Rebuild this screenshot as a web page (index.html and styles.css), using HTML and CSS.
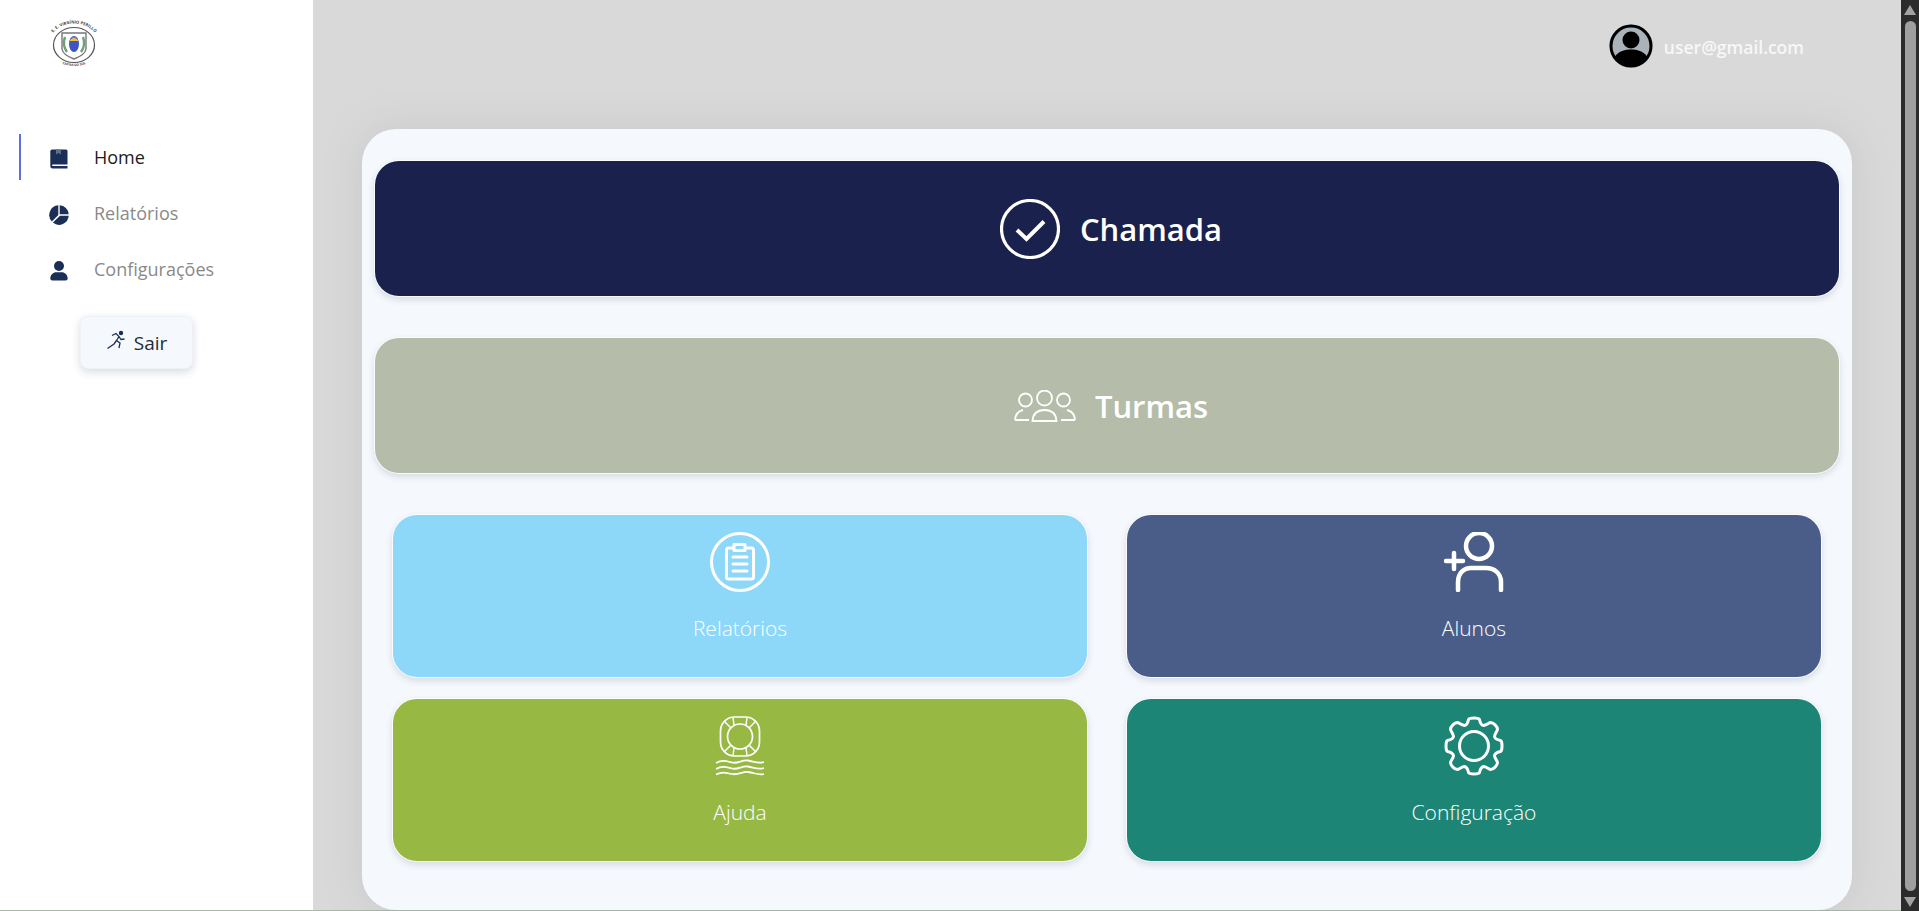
FILE: index.html
```html
<!DOCTYPE html>
<html lang="pt-BR">
<head>
<meta charset="utf-8">
<title>Home</title>
<link rel="stylesheet" href="styles.css">
</head>
<body>
<div class="app">
  <aside class="sidebar">
    <div class="logo">
      <svg width="64" height="52" viewBox="0 0 64 52">
        <defs>
          <path id="arcTop" d="M6 28 A26 22.500 0 0 1 58 28"/>
          <path id="arcBottom" d="M16 44 Q32 52 48 44"/>
        </defs>
        <text class="logo-text"><textPath href="#arcTop" startOffset="50%" text-anchor="middle">E. E. VIRGÍNIO PERILLO</textPath></text>
        <ellipse cx="32" cy="27" rx="20.500" ry="17.500" fill="#fff" stroke="#555" stroke-width="1.200"/>
        <path d="M20 15H44V31Q43 37 32 41Q21 37 20 31Z" fill="#fff" stroke="#777" stroke-width="1.400"/>
        <path d="M23 19Q20 27 25 34M41 19Q44 27 39 34" fill="none" stroke="#6f9f7b" stroke-width="2.400"/>
        <ellipse cx="32" cy="26" rx="5" ry="8" fill="#3f55c5"/>
        <path d="M27.500 23A5 5.500 0 0 1 36.500 23Z" fill="#f0c23c"/>
        <path d="M28.500 20A4.500 3 0 0 1 35.500 20Z" fill="#e26a3a"/>
        <text class="logo-text small"><textPath href="#arcBottom" startOffset="50%" text-anchor="middle">CAXIAS DO SUL</textPath></text>
      </svg>
    </div>
    <nav class="nav">
      <a class="nav-item active">
        <svg class="nav-icon" viewBox="0 0 18 20"><path d="M2 .5H16A1.500 1.500 0 0 1 17.500 2V15.500H2.500A1 1 0 0 0 2.500 17H17.500V19.500H2.500A2.200 2.200 0 0 1 .3 17.300V2.200A1.800 1.800 0 0 1 2 .5Z"/><path class="notch" d="M6 .5H11V5.500L8.500 4L6 5.500Z"/></svg>
        <span>Home</span>
      </a>
      <a class="nav-item">
        <svg class="nav-icon" viewBox="0 0 20 20"><path d="M9.300 .3V10L2.900 16.600A9.700 9.700 0 0 1 9.300 .3Z"/><path d="M10.700 .3A9.700 9.700 0 0 1 19.700 9.300H10.700Z"/><path d="M11 10.700H19.700A9.700 9.700 0 0 1 3.900 17.600Z"/></svg>
        <span>Relatórios</span>
      </a>
      <a class="nav-item">
        <svg class="nav-icon" viewBox="0 0 18 20"><circle cx="9" cy="5" r="5"/><path d="M.3 17.500C.3 13.500 3.500 11.200 6 11.200H12C14.500 11.200 17.700 13.500 17.700 17.500A2 2 0 0 1 15.700 19.500H2.300A2 2 0 0 1 .3 17.500Z"/></svg>
        <span>Configurações</span>
      </a>
    </nav>
    <button class="logout" type="button">
      <svg class="logout-icon" viewBox="0 0 20 20"><circle cx="15" cy="3" r="2.200" fill="#1b2f56"/><path d="M6 5.500L10 3.500L13 6.500L10.500 10.500L14 13L13 18M13 6.500L15 9.500L18.500 9M10.500 10.500L8 14L1.500 18.500" fill="none" stroke="#1b2f56" stroke-width="1.300"/></svg>
      <span>Sair</span>
    </button>
  </aside>

  <main class="main">
    <header class="topbar">
      <svg class="avatar" viewBox="0 0 44 44"><circle cx="22" cy="22" r="21.500" fill="#aab2ba"/><circle cx="22" cy="22" r="20" fill="none" stroke="#000" stroke-width="3"/><circle cx="22" cy="16" r="8.500"/><path d="M6 32.500C10 27 16 25.500 22 25.500C28 25.500 34 27 38 32.500C34 38.500 28 41.500 22 41.500C16 41.500 10 38.500 6 32.500Z"/></svg>
      <span class="user-email">user@gmail.com</span>
    </header>

    <section class="panel">
      <a class="wide-card navy">
        <svg class="check-icon" viewBox="0 0 60 60" fill="none" stroke="#fff"><circle cx="30" cy="30" r="28.500" stroke-width="3.200"/><path d="M17 31L26.500 40L44 22.500" stroke-width="4"/></svg>
        <span>Chamada</span>
      </a>
      <a class="wide-card sage">
        <svg class="group-icon" viewBox="0 0 62 32" fill="none" stroke="#fff" stroke-width="1.800"><circle cx="11.500" cy="10" r="6.500"/><circle cx="30.500" cy="8" r="7.500"/><circle cx="49.500" cy="10" r="6.500"/><path d="M1 30C1.500 24 4.500 21 9 20M1 30H15"/><path d="M61 30C60.500 24 57.500 21 53 20M61 30H47"/><path d="M18.500 31C19 24 23 20 30.500 20C38 20 42 24 42.500 31Z"/></svg>
        <span>Turmas</span>
      </a>
      <div class="card-grid">
        <a class="card sky">
          <svg class="card-icon" viewBox="0 0 60 60" fill="none" stroke="#fff" stroke-width="3" stroke-linecap="round" stroke-linejoin="round"><circle cx="30" cy="30" r="28.500"/><rect x="16.500" y="16" width="27" height="31" rx="2"/><rect x="24" y="12.500" width="11" height="6" fill="#8dd7f9"/><path d="M23 25H37M23 32H37M23 39H37"/></svg>
          <span>Relatórios</span>
        </a>
        <a class="card slate">
          <svg class="card-icon" viewBox="0 0 60 60" fill="none" stroke="#fff" stroke-width="4.500" stroke-linecap="round"><circle cx="35" cy="14" r="13"/><path d="M14 58V50C14 41 20 36 27 36H42C50 36 57 41 57 50V58"/><path d="M2 29H19M10 21V37"/></svg>
          <span>Alunos</span>
        </a>
        <a class="card olive">
          <svg class="card-icon" viewBox="0 0 60 60" fill="none" stroke="#fff" stroke-width="1.500"><rect x="10.500" y="1" width="39" height="39" rx="14" stroke-width="1.700"/><circle cx="30" cy="20.500" r="12.500" stroke-width="1.700"/><path d="M14 5L21 12M46 5L39 12M14 36L21 29M46 36L39 29M23 1.500L24 9M37 1.500L36 9M23 39.500L24 32M37 39.500L36 32"/><path d="M6 47C12 43.500 16 45 22 46.500C28 48 32 43.500 38 44.500C44 45.500 48 48 54 46M6 53C12 49.500 16 51 22 52.500C28 54 32 49.500 38 50.500C44 51.500 48 54 54 52M6 58.500C12 55.500 16 56.500 22 58C28 59.500 32 55.500 38 56C44 56.500 48 59.500 54 58" stroke-width="1.800"/></svg>
          <span>Ajuda</span>
        </a>
        <a class="card teal">
          <svg class="card-icon" viewBox="0 0 60 60" fill="none" stroke="#fff" stroke-width="3" stroke-linejoin="round"><circle cx="30" cy="30" r="14.500"/><path d="M24.500 3.500C25 1.500 35 1.500 35.500 3.500C36 6 37 9 39.500 9.500C42 9.500 44.500 7 46.500 6.500C49.500 6.500 53.500 10.500 53.500 13.500C53 15.500 50.500 18 50.500 20.500C51 23 54 24 56.500 24.500C58.500 25 58.500 35 56.500 35.500C54 36 51 37 50.500 39.500C50.500 42 53 44.500 53.500 46.500C53.500 49.500 49.500 53.500 46.500 53.500C44.500 53 42 50.500 39.500 50.500C37 51 36 54 35.500 56.500C35 58.500 25 58.500 24.500 56.500C24 54 23 51 20.500 50.500C18 50.500 15.500 53 13.500 53.500C10.500 53.500 6.500 49.500 6.500 46.500C7 44.500 9.500 42 9.500 39.500C9 37 6 36 3.500 35.500C1.500 35 1.500 25 3.500 24.500C6 24 9 23 9.500 20.500C9.500 18 7 15.500 6.500 13.500C6.500 10.500 10.500 6.500 13.500 6.500C15.500 7 18 9.500 20.500 9.500C23 9 24 6 24.500 3.500Z"/></svg>
          <span>Configuração</span>
        </a>
      </div>
    </section>
  </main>

  <div class="scrollbar" aria-hidden="true">
    <span class="arrow up"></span>
    <span class="thumb"></span>
    <span class="arrow down"></span>
  </div>
</div>
</body>
</html>
```

FILE: styles.css
```css
* { box-sizing: border-box; }

html, body {
  margin: 0;
  height: 100%;
  overflow: hidden;
}

body {
  font-family: "Open Sans", "Noto Sans", sans-serif;
  background: #d9d9d9;
}

.app {
  display: flex;
  height: 911px;
}

/* Sidebar */
.sidebar {
  flex: 0 0 313px;
  background: #fff;
  padding-top: 18px;
  border-bottom: 1px solid #a9b8a8;
}

.logo {
  height: 52px;
  margin-left: 42px;
}

.logo-text {
  font-size: 4.200px;
  font-weight: 700;
  fill: #444;
  font-family: "Open Sans", sans-serif;
}

.logo-text.small { font-size: 3.200px; }

.nav {
  display: flex;
  flex-direction: column;
  margin: 64px 0 0 19px;
}

.nav-item {
  display: flex;
  align-items: center;
  height: 46px;
  margin-bottom: 10px;
  padding-left: 28px;
  color: #8a8a8a;
  font-size: 18px;
  border-left: 2px solid transparent;
}

.nav-item.active {
  color: #1c1c1c;
  border-left-color: #5f6fdc;
}

.nav-icon {
  width: 20px;
  height: 20px;
  margin: 4px 25px 0 0;
  fill: #1b2f56;
}

.notch { fill: #5d6e8e; }

.logout {
  display: flex;
  align-items: center;
  justify-content: center;
  gap: 8px;
  width: 113px;
  height: 53px;
  margin: 14px 0 0 80px;
  padding: 0;
  background: #f5f9fd;
  border: 1px solid #eef1f5;
  border-radius: 8px;
  box-shadow: 0 3px 8px rgba(40, 50, 80, .18);
  color: #222b38;
  font: 500 19px "Open Sans", sans-serif;
}

.logout-icon { width: 20px; height: 20px; margin-top: -5px; }

/* Main */
.main {
  flex: 1;
  min-width: 0;
  padding: 0 49px;
  border-bottom: 1px solid #a9b8a8;
}

.topbar {
  display: flex;
  align-items: center;
  justify-content: flex-end;
  gap: 11px;
  height: 92px;
  padding-right: 48px;
}

.avatar { width: 44px; height: 44px; }

.user-email {
  margin-top: 2px;
  color: #f7f7f7;
  font-size: 17.500px;
  font-weight: 600;
}

.panel {
  height: 781px;
  margin-top: 37px;
  padding: 32px 13px 0;
  background: #f5f9fd;
  border-radius: 34px;
  box-shadow: 0 0 40px rgba(120, 130, 140, .18);
}

.wide-card {
  display: flex;
  align-items: center;
  justify-content: center;
  height: 135px;
  margin-bottom: 42px;
  padding-left: 8px;
  border-radius: 24px;
  box-shadow: 0 0 0 1px rgba(255, 255, 255, .8), 0 3px 6px 1px rgba(60, 70, 100, .16);
  color: #fff;
  font-size: 31px;
  font-weight: 600;
}

.navy { background: #1a214d; }
.sage { background: #b5bcaa; }
.sky { background: #8dd7f9; }
.slate { background: #4a5d88; }
.olive { background: #97b843; }
.teal { background: #1c8575; }

.check-icon { width: 60px; height: 60px; margin-right: 20px; }
.group-icon { width: 62px; height: 32px; margin-right: 19px; }

.card-grid {
  display: grid;
  grid-template-columns: 1fr 1fr;
  gap: 22px 40px;
  padding: 0 18px;
}

.card {
  display: flex;
  flex-direction: column;
  align-items: center;
  height: 162px;
  padding-top: 17px;
  border-radius: 24px;
  box-shadow: 0 0 0 1px rgba(255, 255, 255, .8), 0 3px 6px 1px rgba(60, 70, 100, .16);
  color: #fff;
  font-size: 21px;
  font-weight: 300;
}

.card-icon { width: 60px; height: 60px; margin-bottom: 22px; }

/* Scrollbar */
.scrollbar {
  flex: 0 0 18px;
  display: flex;
  flex-direction: column;
  align-items: center;
  justify-content: space-between;
  padding: 5px 0 4px;
  background: #2b2b2b;
}

.thumb {
  flex: 1;
  width: 11px;
  margin: 6px 0;
  background: #9f9f9f;
  border-radius: 6px;
}

.arrow {
  width: 0;
  height: 0;
  border-left: 6px solid transparent;
  border-right: 6px solid transparent;
}

.arrow.up { border-bottom: 10px solid #a3a3a3; }
.arrow.down { border-top: 10px solid #a3a3a3; }
```
